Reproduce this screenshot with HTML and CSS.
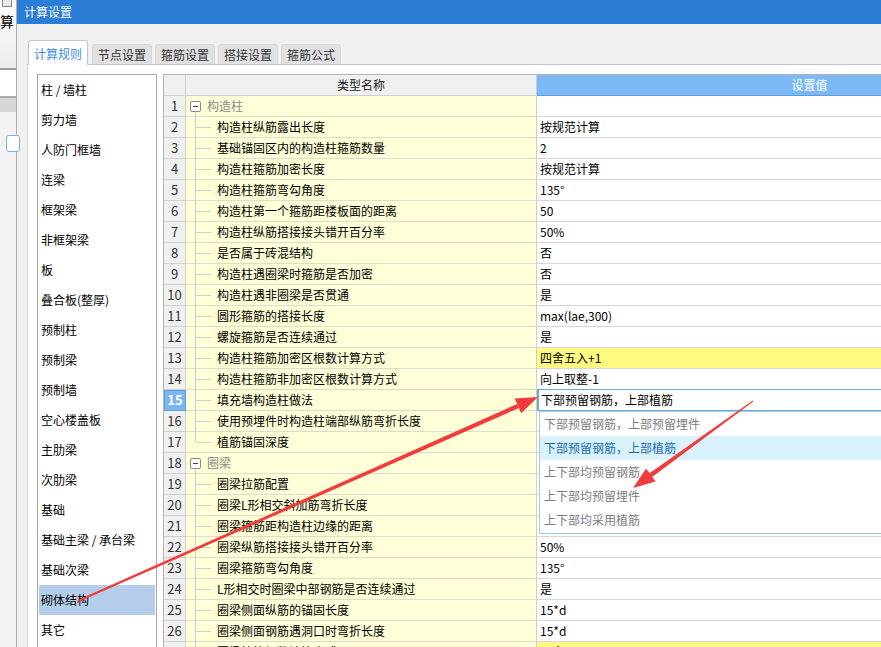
FILE: index.html
```html
<!DOCTYPE html>
<html lang="zh">
<head>
<meta charset="utf-8">
<title>计算设置</title>
<link rel="stylesheet" href="styles.css">
</head>
<body>
<div class="app">
  <div class="bgapp">
    <div class="bg-top"><span class="bg-icon"></span><span class="bg-char">算</span></div>
    <div class="bg-mid"></div>
    <div class="bg-band"></div>
    <div class="bg-rest"><span class="bg-btn"></span></div>
  </div>
  <div class="dialog">
    <div class="titlebar">计算设置</div>
    <div class="dbody">
      <div class="tabs">
        <div class="tab active">计算规则</div>
        <div class="tab">节点设置</div>
        <div class="tab">箍筋设置</div>
        <div class="tab">搭接设置</div>
        <div class="tab">箍筋公式</div>
      </div>
      <div class="pane">
        <div class="list">
          <div class="item">柱 / 墙柱</div>
          <div class="item">剪力墙</div>
          <div class="item">人防门框墙</div>
          <div class="item">连梁</div>
          <div class="item">框架梁</div>
          <div class="item">非框架梁</div>
          <div class="item">板</div>
          <div class="item">叠合板(整厚)</div>
          <div class="item">预制柱</div>
          <div class="item">预制梁</div>
          <div class="item">预制墙</div>
          <div class="item">空心楼盖板</div>
          <div class="item">主肋梁</div>
          <div class="item">次肋梁</div>
          <div class="item">基础</div>
          <div class="item">基础主梁 / 承台梁</div>
          <div class="item">基础次梁</div>
          <div class="item selected">砌体结构</div>
          <div class="item">其它</div>
        </div>
        <div class="grid">
          <div class="row head">
            <div class="num"></div>
            <div class="name">类型名称</div>
            <div class="val">设置值</div>
          </div>
          <div class="row"><div class="num">1</div><div class="name group"><span class="minus"></span>构造柱</div><div class="val"></div></div>
          <div class="row"><div class="num">2</div><div class="name child">构造柱纵筋露出长度</div><div class="val">按规范计算</div></div>
          <div class="row"><div class="num">3</div><div class="name child">基础锚固区内的构造柱箍筋数量</div><div class="val">2</div></div>
          <div class="row"><div class="num">4</div><div class="name child">构造柱箍筋加密长度</div><div class="val">按规范计算</div></div>
          <div class="row"><div class="num">5</div><div class="name child">构造柱箍筋弯勾角度</div><div class="val">135°</div></div>
          <div class="row"><div class="num">6</div><div class="name child">构造柱第一个箍筋距楼板面的距离</div><div class="val">50</div></div>
          <div class="row"><div class="num">7</div><div class="name child">构造柱纵筋搭接接头错开百分率</div><div class="val">50%</div></div>
          <div class="row"><div class="num">8</div><div class="name child">是否属于砖混结构</div><div class="val">否</div></div>
          <div class="row"><div class="num">9</div><div class="name child">构造柱遇圈梁时箍筋是否加密</div><div class="val">否</div></div>
          <div class="row"><div class="num">10</div><div class="name child">构造柱遇非圈梁是否贯通</div><div class="val">是</div></div>
          <div class="row"><div class="num">11</div><div class="name child">圆形箍筋的搭接长度</div><div class="val">max(lae,300)</div></div>
          <div class="row"><div class="num">12</div><div class="name child">螺旋箍筋是否连续通过</div><div class="val">是</div></div>
          <div class="row"><div class="num">13</div><div class="name child">构造柱箍筋加密区根数计算方式</div><div class="val yellow">四舍五入+1</div></div>
          <div class="row"><div class="num">14</div><div class="name child">构造柱箍筋非加密区根数计算方式</div><div class="val">向上取整-1</div></div>
          <div class="row"><div class="num current">15</div><div class="name child">填充墙构造柱做法</div><div class="val"><div class="editor">下部预留钢筋，上部植筋</div></div></div>
          <div class="row"><div class="num">16</div><div class="name child">使用预埋件时构造柱端部纵筋弯折长度</div><div class="val"></div></div>
          <div class="row"><div class="num">17</div><div class="name child last">植筋锚固深度</div><div class="val"></div></div>
          <div class="row"><div class="num">18</div><div class="name group"><span class="minus"></span>圈梁</div><div class="val"></div></div>
          <div class="row"><div class="num">19</div><div class="name child">圈梁拉筋配置</div><div class="val"></div></div>
          <div class="row"><div class="num">20</div><div class="name child">圈梁L形相交斜加筋弯折长度</div><div class="val"></div></div>
          <div class="row"><div class="num">21</div><div class="name child">圈梁箍筋距构造柱边缘的距离</div><div class="val"></div></div>
          <div class="row"><div class="num">22</div><div class="name child">圈梁纵筋搭接接头错开百分率</div><div class="val">50%</div></div>
          <div class="row"><div class="num">23</div><div class="name child">圈梁箍筋弯勾角度</div><div class="val">135°</div></div>
          <div class="row"><div class="num">24</div><div class="name child">L形相交时圈梁中部钢筋是否连续通过</div><div class="val">是</div></div>
          <div class="row"><div class="num">25</div><div class="name child">圈梁侧面纵筋的锚固长度</div><div class="val">15*d</div></div>
          <div class="row"><div class="num">26</div><div class="name child">圈梁侧面钢筋遇洞口时弯折长度</div><div class="val">15*d</div></div>
          <div class="row"><div class="num">27</div><div class="name child">圈梁拉筋根数计算方式</div><div class="val yellow">四舍五入+1</div></div>

          <div class="dropdown">
            <div class="opt">下部预留钢筋，上部预留埋件</div>
            <div class="opt hover">下部预留钢筋，上部植筋</div>
            <div class="opt">上下部均预留钢筋</div>
            <div class="opt">上下部均预留埋件</div>
            <div class="opt">上下部均采用植筋</div>
          </div>
        </div>
      </div>
    </div>
  </div>
</div>
<svg class="arrows" width="881" height="647" viewBox="0 0 881 647">
  <polygon points="78.4,601.9 77.6,600.1 517.1,404 518.9,408" fill="#f23b3b"/>
  <polygon points="538,397 521.1,413.2 514.7,398.6" fill="#f23b3b"/>
  <polygon points="752.7,400.6 753.3,401.4 652.1,476.9 649.5,473.3" fill="#f23b3b"/>
  <polygon points="633,488 655.5,481.6 646.1,468.6" fill="#f23b3b"/>
</svg>
</body>
</html>
```

FILE: styles.css
```css
* { box-sizing: border-box; }
html, body {
  margin: 0;
  padding: 0;
  width: 881px;
  height: 647px;
  overflow: hidden;
  background: #f0f0f0;
  font-family: "Noto Sans CJK SC", "Microsoft YaHei", sans-serif;
  font-size: 12px;
  color: #000;
}
.app {
  display: flex;
  width: 881px;
  height: 647px;
  position: relative;
}

/* background application strip */
.bgapp {
  width: 16px;
  flex: none;
  display: flex;
  flex-direction: column;
  background: #f0f0f0;
}
.bg-top {
  height: 70px;
  background: linear-gradient(#ffffff, #ececec);
  border-bottom: 2px solid #9a9a9a;
  position: relative;
}
.bg-icon {
  position: absolute;
  left: 2px;
  top: 0;
  width: 10px;
  height: 7px;
  border: 1px solid #888;
  border-top: none;
  background: #e8e8e8;
}
.bg-char {
  position: absolute;
  left: 0;
  top: 13px;
  font-size: 14px;
  line-height: 16px;
}
.bg-mid {
  height: 26px;
  background: #ffffff;
}
.bg-band {
  height: 16px;
  background: #d6d6d6;
  border-top: 2px solid #a8a8a8;
}
.bg-rest {
  flex: 1;
  background: #f3f3f3;
  position: relative;
}
.bg-btn {
  position: absolute;
  left: 6px;
  top: 23px;
  width: 14px;
  height: 17px;
  border: 1px solid #7fb2ea;
  border-radius: 3px;
  background: #fff;
}

/* dialog */
.dialog {
  flex: 1;
  display: flex;
  flex-direction: column;
  border-left: 1px solid #b0b0b0;
  min-width: 0;
}
.titlebar {
  height: 24px;
  flex: none;
  background: #2c7dd6;
  color: #fff;
  font-size: 12px;
  line-height: 24px;
  padding-left: 7px;
}
.dbody {
  flex: 1;
  display: flex;
  flex-direction: column;
  padding: 16px 0 0 10px;
  background: #f0f0f0;
  min-height: 0;
}
.tabs {
  display: flex;
  align-items: flex-end;
  gap: 3px;
  height: 24px;
  padding-left: 1px;
  position: relative;
  z-index: 1;
}
.tab {
  width: 60px;
  height: 20px;
  background: #e1e1e1;
  border: 1px solid #d9d9d9;
  border-bottom: none;
  border-radius: 3px 3px 0 0;
  color: #333;
  text-align: center;
  line-height: 19px;
}
.tab.active {
  height: 25px;
  margin-bottom: -1px;
  background: #fff;
  border-color: #c6c6c6;
  color: #3b8de3;
  line-height: 25px;
}
.tab.active + .tab { margin-left: 1px; }

.pane {
  flex: 1;
  display: flex;
  align-items: flex-start;
  background: #fff;
  border-top: 1px solid #c3c3ca;
  border-left: 1px solid #d6d6d6;
  padding: 9px 0 0 9px;
  min-height: 0;
  overflow: hidden;
}

/* left list */
.list {
  width: 120px;
  flex: none;
  height: 600px;
  border: 1px solid #a9a9a9;
  padding: 0 1px;
}
.item {
  height: 30px;
  line-height: 30px;
  padding-left: 2px;
  white-space: nowrap;
}
.item.selected {
  background: #b4cdeb;
}

/* grid */
.grid {
  margin-left: 6px;
  position: relative;
  flex: none;
  width: 920px;
  border-left: 1px solid #b5b5b5;
  border-top: 1px solid #b5b5b5;
}
.row {
  display: flex;
  height: 21px;
}
.num {
  width: 22px;
  flex: none;
  background: #f0f0f0;
  border-right: 1px solid #cfcfcf;
  border-bottom: 1px solid #cfcfcf;
  text-align: center;
  font-size: 13px;
  line-height: 20px;
  color: #333;
}
.num.current {
  background: #7bb6f2;
  color: #fff;
  font-weight: bold;
  border: 1px solid #5e9be0;
  line-height: 18px;
}
.name {
  width: 351px;
  flex: none;
  background: #ffffd8;
  border-right: 1px solid #cfcfcf;
  border-bottom: 1px solid #dcdcd0;
  line-height: 20px;
  white-space: nowrap;
  position: relative;
}
.val {
  width: 545px;
  flex: none;
  background: #fff;
  border-bottom: 1px solid #d6d6d6;
  line-height: 20px;
  padding-left: 3px;
  white-space: nowrap;
  position: relative;
}
.val.yellow { background: #fffb82; }

.row.head { height: 21px; }
.row.head .num { background: #f0f0f0; }
.row.head .name {
  background: #f0f0f0;
  text-align: center;
  color: #222;
  border-bottom: 1px solid #cfcfcf;
}
.row.head .val {
  background: #7db9f6;
  color: #fff;
  text-align: center;
  padding-left: 0;
  border-bottom: 1px solid #5a9ee2;
}

.name.group {
  padding-left: 21px;
  color: #8a8a8a;
}
.minus {
  position: absolute;
  left: 4px;
  top: 5px;
  width: 11px;
  height: 11px;
  border: 1px solid #8a8a8a;
  border-radius: 2px;
  background: #fff;
}
.minus::after {
  content: "";
  position: absolute;
  left: 2px;
  top: 4px;
  width: 5px;
  height: 1px;
  background: #444;
}
.name.group::after {
  content: "";
  position: absolute;
  left: 9px;
  top: 16px;
  bottom: -1px;
  width: 1px;
  background: #cfcfcf;
}
.name.child {
  padding-left: 31px;
}
.name.child::before {
  content: "";
  position: absolute;
  left: 9px;
  top: 0;
  bottom: -1px;
  width: 1px;
  background: #cfcfcf;
}
.name.child.last::before { bottom: 10px; }
.name.child::after {
  content: "";
  position: absolute;
  left: 10px;
  top: 10px;
  width: 15px;
  height: 1px;
  background: #cfcfcf;
}

.editor {
  position: absolute;
  left: 0;
  top: -1px;
  right: 0;
  bottom: -1px;
  border: 1px solid #6ba6dd;
  border-left-width: 2px;
  padding-left: 2px;
  line-height: 19px;
  background: #fff;
}

.dropdown {
  position: absolute;
  left: 375px;
  top: 336px;
  width: 420px;
  height: 123px;
  background: #fff;
  border: 1px solid #9fcde0;
  padding-top: 0;
}
.opt {
  height: 24px;
  line-height: 24px;
  padding-left: 4px;
  color: #7d7d7d;
  white-space: nowrap;
}
.opt.hover {
  background: #d9f2fb;
  color: #1a6db6;
}

.arrows {
  position: absolute;
  left: 0;
  top: 0;
  pointer-events: none;
}
```
